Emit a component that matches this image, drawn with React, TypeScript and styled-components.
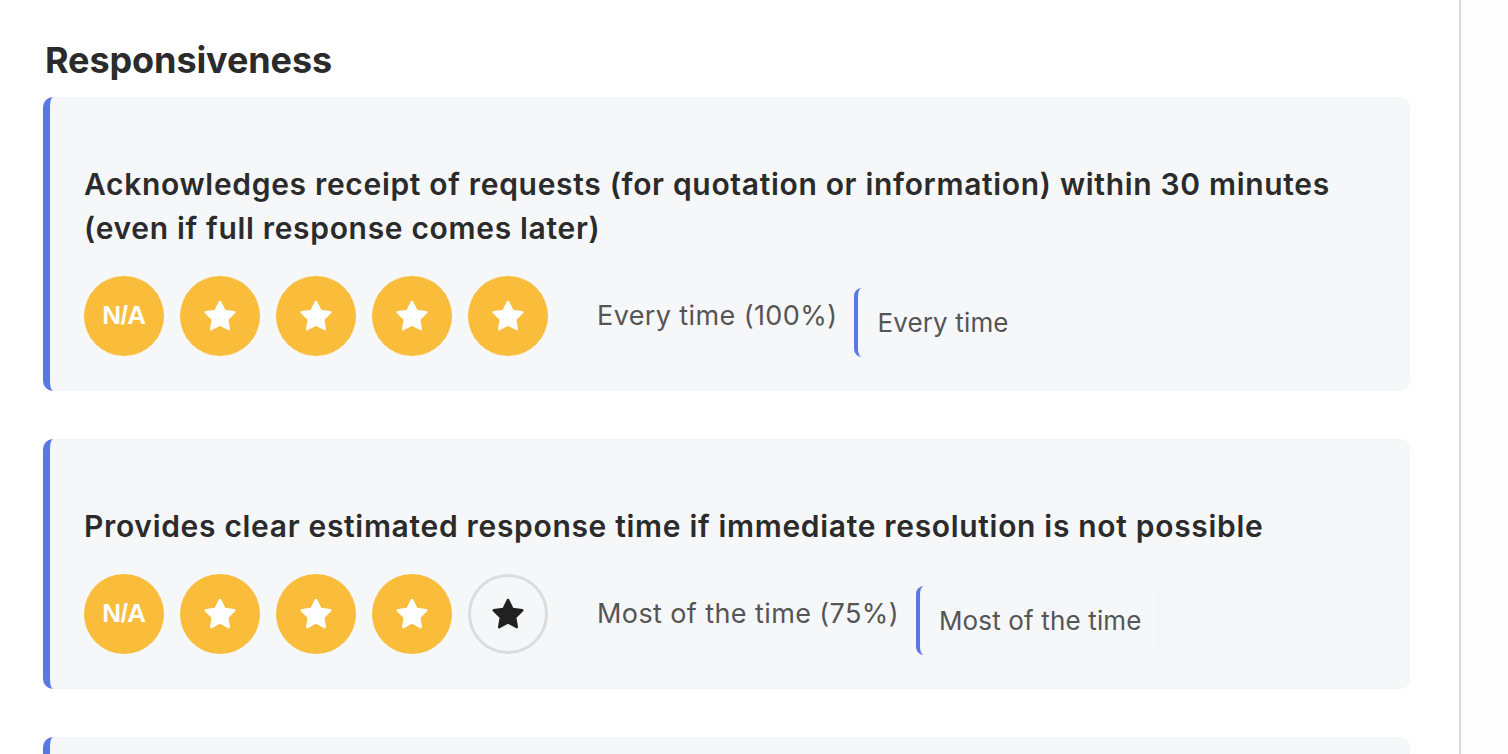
import React from "react";
import styled, { createGlobalStyle } from "styled-components";

const Global = createGlobalStyle`
  html, body { margin: 0; padding: 0; background: #ffffff; }
  body { font-family: Inter, "Noto Sans", sans-serif; -webkit-font-smoothing: antialiased; }
  #root { min-height: 754px; }
`;

const Page = styled.div`
  display: flex;
  min-height: 754px;
  height: 754px;
  overflow: hidden;
`;

const Main = styled.main`
  flex: 1;
  padding: 40px 49px 0 43px;
  display: flex;
  flex-direction: column;
`;

const Divider = styled.div`
  width: 2px;
  background: #d9d9d9;
`;

const Side = styled.aside`
  width: 47px;
  background: #fdfdfd;
`;

const Title = styled.h2`
  margin: 0 0 17px 2px;
  font-size: 36px;
  line-height: 40px;
  font-weight: 700;
  color: #2b2b2b;
  letter-spacing: -0.1px;
`;

const Cards = styled.div`
  display: flex;
  flex-direction: column;
  gap: 48px;
`;

const Card = styled.section`
  background: #f6f7f9;
  border-left: 7px solid #5a78e2;
  border-radius: 10px;
  box-shadow: inset 0 0 0 0.5px rgba(90, 120, 226, 0.04);
  padding: 65px 34px 34px 34px;
  display: flex;
  flex-direction: column;
  gap: 24px;
`;

const Question = styled.h3`
  margin: 0;
  font-size: 30px;
  line-height: 44px;
  font-weight: 600;
  color: #2b2b2b;
  letter-spacing: 0.68px;
`;

const Row = styled.div`
  display: flex;
  align-items: center;
`;

const Circles = styled.div`
  display: flex;
  gap: 16px;
  margin-right: 49px;
`;

const Circle = styled.div<{ $filled: boolean }>`
  width: 80px;
  height: 80px;
  border-radius: 50%;
  box-sizing: border-box;
  display: flex;
  align-items: center;
  justify-content: center;
  background: ${(p) => (p.$filled ? "#f9bc3b" : "transparent")};
  border: ${(p) => (p.$filled ? "none" : "3px solid #dcdcdc")};
  color: ${(p) => (p.$filled ? "#ffffff" : "#222222")};
`;

const NA = styled.span`
  font-family: "Liberation Sans", Arial, sans-serif;
  font-weight: 700;
  font-size: 26px;
  letter-spacing: -0.5px;
  color: #ffffff;
`;

const Label = styled.span`
  font-size: 27px;
  letter-spacing: 0.4px;
  color: #555555;
  margin-right: 17px;
  white-space: nowrap;
`;

const Answer = styled.div`
  margin-top: 14px;
  height: 69px;
  box-sizing: border-box;
  display: flex;
  align-items: center;
  padding: 0 16px 0 19px;
  border-left: 4px solid #5a78e2;
  border-radius: 8px;
  box-shadow: inset 0 0 0 0.5px rgba(90, 120, 226, 0.04);
  font-size: 26px;
  letter-spacing: 0.15px;
  color: #555555;
  white-space: nowrap;
`;

const Star = ({ color }: { color: string }) => (
  <svg width="36" height="36" viewBox="0 0 24 24">
    <path
      d="M12 2.6l2.95 5.98 6.6.96-4.78 4.65 1.13 6.57L12 17.66l-5.9 3.1 1.13-6.57-4.78-4.65 6.6-.96z"
      fill={color}
      stroke={color}
      strokeWidth="1.6"
      strokeLinejoin="round"
    />
  </svg>
);

type Item = { q: string; score: number; label: string; answer: string };

const items: Item[] = [
  {
    q: "Acknowledges receipt of requests (for quotation or information) within 30 minutes (even if full response comes later)",
    score: 4,
    label: "Every time (100%)",
    answer: "Every time",
  },
  {
    q: "Provides clear estimated response time if immediate resolution is not possible",
    score: 3,
    label: "Most of the time (75%)",
    answer: "Most of the time",
  },
  {
    q: "Follows up proactively on open requests",
    score: 4,
    label: "Every time (100%)",
    answer: "Every time",
  },
];

export default function App() {
  return (
    <>
      <Global />
      <Page>
        <Main>
          <Title>Responsiveness</Title>
          <Cards>
            {items.map((it, i) => (
              <Card key={i}>
                <Question>{it.q}</Question>
                <Row>
                  <Circles>
                    <Circle $filled>
                      <NA>N/A</NA>
                    </Circle>
                    {[1, 2, 3, 4].map((n) => (
                      <Circle key={n} $filled={n <= it.score}>
                        <Star color={n <= it.score ? "#ffffff" : "#222222"} />
                      </Circle>
                    ))}
                  </Circles>
                  <Label>{it.label}</Label>
                  <Answer>{it.answer}</Answer>
                </Row>
              </Card>
            ))}
          </Cards>
        </Main>
        <Divider />
        <Side />
      </Page>
    </>
  );
}
